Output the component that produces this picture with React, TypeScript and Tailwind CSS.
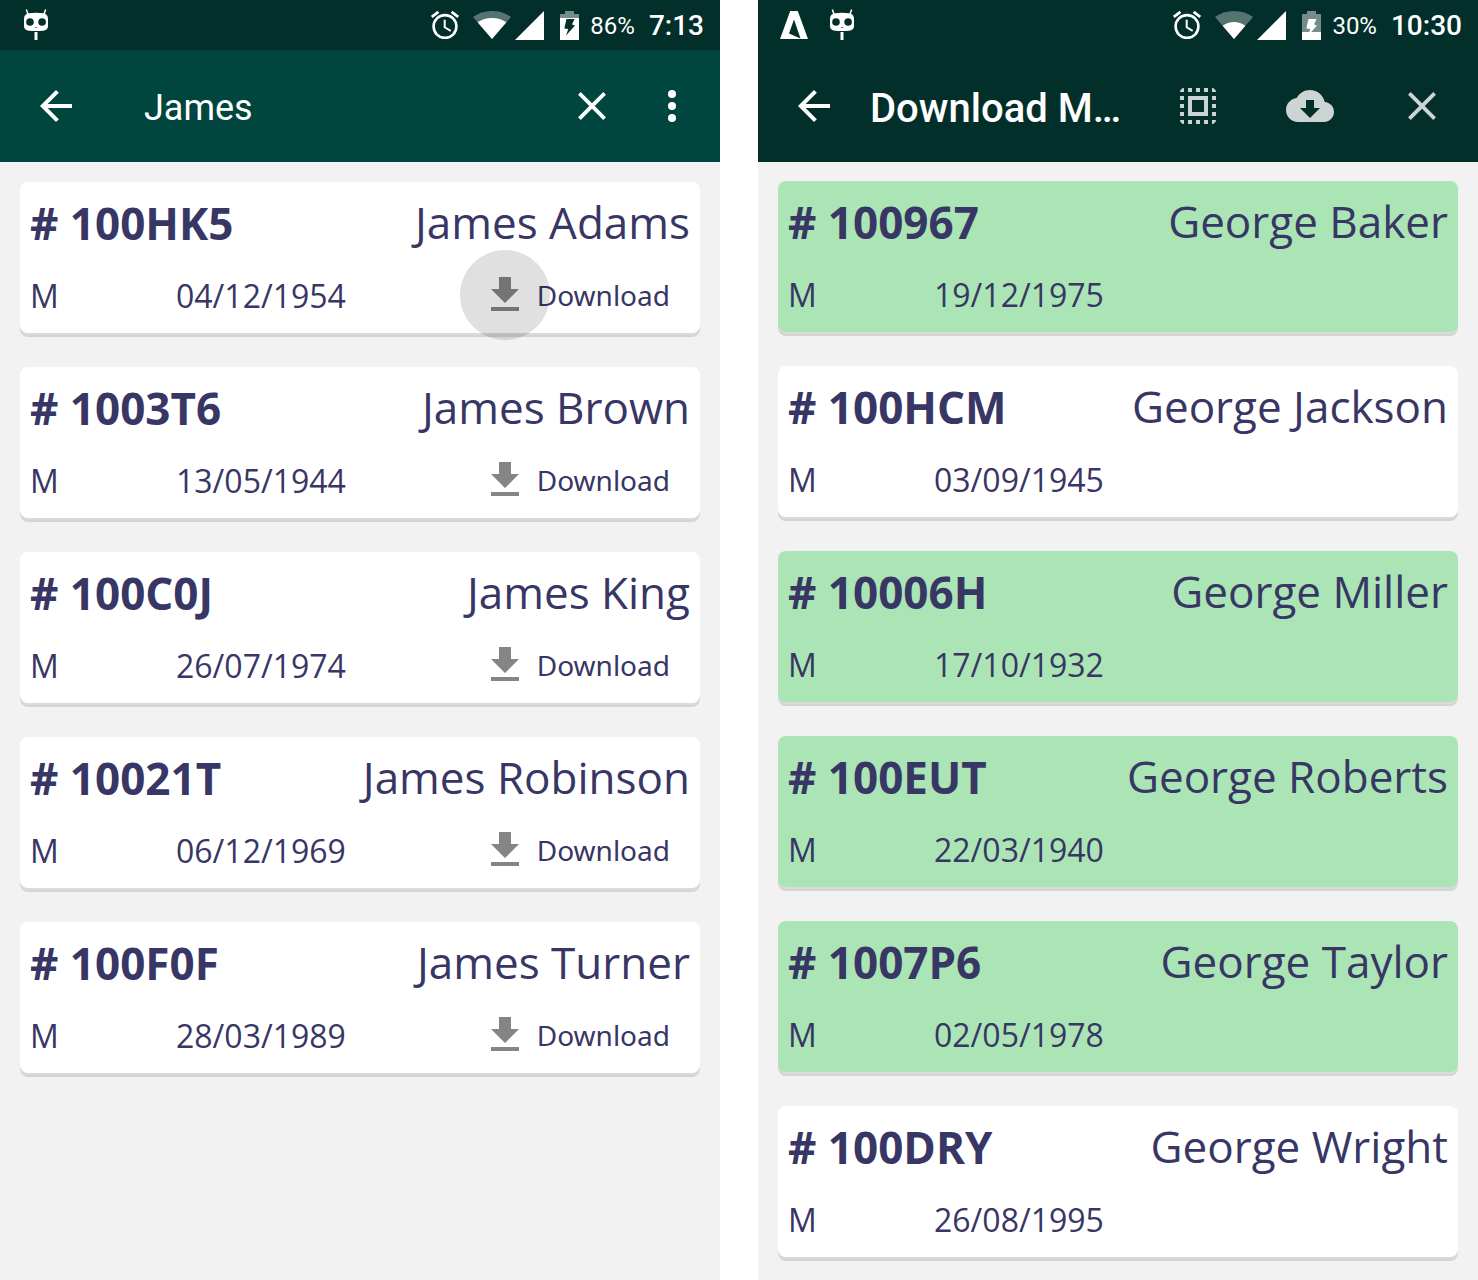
import type { ReactNode } from "react";

type Patient = { id: string; name: string; dob: string; selected?: boolean; pressed?: boolean };

const found: Patient[] = [
  { id: "100HK5", name: "James Adams", dob: "04/12/1954", pressed: true },
  { id: "1003T6", name: "James Brown", dob: "13/05/1944" },
  { id: "100C0J", name: "James King", dob: "26/07/1974" },
  { id: "10021T", name: "James Robinson", dob: "06/12/1969" },
  { id: "100F0F", name: "James Turner", dob: "28/03/1989" },
];

const picked: Patient[] = [
  { id: "100967", name: "George Baker", dob: "19/12/1975", selected: true },
  { id: "100HCM", name: "George Jackson", dob: "03/09/1945" },
  { id: "10006H", name: "George Miller", dob: "17/10/1932", selected: true },
  { id: "100EUT", name: "George Roberts", dob: "22/03/1940", selected: true },
  { id: "1007P6", name: "George Taylor", dob: "02/05/1978", selected: true },
  { id: "100DRY", name: "George Wright", dob: "26/08/1995" },
];

function RobotIcon() {
  return (
    <svg className="h-8 w-6" viewBox="0 0 24 32" fill="#fff" aria-hidden="true">
      <path d="M2.3 0.5 4 5M21.7 0.5 20 5" stroke="#fff" strokeWidth="1.5" fill="none" />
      <path
        fillRule="evenodd"
        d="M5 4.3Q12 3.2 19 4.3Q24 5 24 10V17Q24 21.3 19 21.7Q12 22.5 5 21.7Q0 21.3 0 17V10Q0 5 5 4.3ZM6 9.2a3.8 3.8 0 1 0 0 7.6a3.8 3.8 0 1 0 0-7.6ZM18.1 9.2a3.8 3.8 0 1 0 0 7.6a3.8 3.8 0 1 0 0-7.6ZM10.5 18Q12 18.6 13.5 18Q12 19.8 10.5 18Z"
      />
      <path d="M10.5 23h3v8h-3z" />
    </svg>
  );
}

function LetterLogo() {
  return (
    <svg className="h-7 w-7" viewBox="0 0 28 28" fill="#fff" aria-hidden="true">
      <path fillRule="evenodd" d="M10.2 0h7.6L28 28H0ZM14 8.5 9 22.5 20.5 27.5Z" />
    </svg>
  );
}

function AlarmIcon() {
  return (
    <svg className="h-7 w-7" viewBox="0 0 28 28" fill="none" stroke="#fff" aria-hidden="true">
      <circle cx="14" cy="15.5" r="11.4" strokeWidth="2.6" />
      <path d="M.8 6 7.4.9M27.2 6 20.6.9" strokeWidth="2.8" />
      <path d="M13.7 8.8v7.5l6 3.6" strokeWidth="2" />
    </svg>
  );
}

function WifiIcon({ low }: { low?: boolean }) {
  return (
    <svg className="h-7 w-[38px]" viewBox="0 0 38 28" fill="#fff" aria-hidden="true">
      <path d="M0 6Q8 0 19 0T38 6L19 28Z" opacity=".33" />
      {low ? <path d="M7.6 14.8Q12.5 11 19 11T30.4 14.8L19 28Z" /> : <path d="M4.6 11.3Q11 7 19 7T33.4 11.3L19 28Z" />}
    </svg>
  );
}

function SignalIcon() {
  return (
    <svg className="h-[29px] w-[29px]" viewBox="0 0 29 29" fill="#fff" aria-hidden="true">
      <path d="M29 0V29H0Z" />
    </svg>
  );
}

function BatteryIcon({ low }: { low?: boolean }) {
  const bolt = "M6.5 8h8l-2.500 5.500L15 14.500 6 24.500 8.300 18 4.300 17.500Z";
  return (
    <svg className="h-[29px] w-[19px]" viewBox="0 0 19 29" fill="#fff" aria-hidden="true">
      {low ? (
        <>
          <path d="M5 0h9v3h5v18H0V3h5Z" opacity=".45" />
          <path d="M0 21h19v8H0Z" />
          <path d={bolt} />
        </>
      ) : (
        <>
          <path d="M5 0h9v3h5v4H0V3h5Z" opacity=".45" />
          <path d="M0 7h19v22H0Z" />
          <path d={bolt} fill="#022f2a" />
        </>
      )}
    </svg>
  );
}

function StatusBar({ time, charge, low, children }: { time: string; charge: string; low?: boolean; children: ReactNode }) {
  return (
    <div className="flex h-[50px] items-center justify-between bg-[#022f2a] pr-4 font-[Roboto,sans-serif] text-white">
      <div className="flex items-center gap-[22px]">{children}</div>
      <div className="flex items-center">
        <AlarmIcon />
        <span className="ml-3.5 flex">
          <WifiIcon low={low} />
        </span>
        <span className="ml-1 flex">
          <SignalIcon />
        </span>
        <span className="ml-4 flex">
          <BatteryIcon low={low} />
        </span>
        <span className="ml-[11px] pt-0.5 text-[24px] leading-[50px]">{charge}</span>
        <span className="ml-3.5 pt-0.5 text-[28px] leading-[50px] font-medium">{time}</span>
      </div>
    </div>
  );
}

function BackIcon() {
  return (
    <svg className="h-12 w-12" viewBox="0 0 24 24" fill="#fff" aria-hidden="true">
      <path d="M20 11H7.830l5.590-5.590L12 4l-8 8 8 8 1.410-1.410L7.830 13H20v-2z" />
    </svg>
  );
}

function CloseIcon() {
  return (
    <svg className="h-12 w-12" viewBox="0 0 24 24" fill="none" stroke="currentColor" strokeWidth="1.9" aria-hidden="true">
      <path d="M5.7 5.7 18.3 18.3M18.3 5.7 5.7 18.3" />
    </svg>
  );
}

function MoreIcon() {
  return (
    <svg className="h-12 w-12" viewBox="0 0 24 24" fill="#fff" aria-hidden="true">
      <circle cx="12" cy="6" r="2" />
      <circle cx="12" cy="12" r="2" />
      <circle cx="12" cy="18" r="2" />
    </svg>
  );
}

function SelectAllIcon() {
  return (
    <svg className="h-12 w-12" viewBox="0 0 24 24" fill="currentColor" aria-hidden="true">
      <path d="M3 5h2V3c-1.100 0-2 .9-2 2zm0 8h2v-2H3v2zm4 8h2v-2H7v2zM3 9h2V7H3v2zm10-6h-2v2h2V3zm6 0v2h2c0-1.100-.9-2-2-2zM5 21v-2H3c0 1.100.9 2 2 2zm-2-4h2v-2H3v2zM9 3H7v2h2V3zm2 18h2v-2h-2v2zm8-8h2v-2h-2v2zm0 8c1.100 0 2-.9 2-2h-2v2zm0-12h2V7h-2v2zm0 8h2v-2h-2v2zm-4 4h2v-2h-2v2zm0-16h2V3h-2v2zM7 17h10V7H7v10zm2-8h6v6H9V9z" />
    </svg>
  );
}

function CloudIcon() {
  return (
    <svg className="h-12 w-12" viewBox="0 0 24 24" fill="currentColor" aria-hidden="true">
      <path
        fillRule="evenodd"
        d="M19.350 10.040C18.670 6.590 15.640 4 12 4 9.110 4 6.600 5.640 5.350 8.040 2.340 8.360 0 10.910 0 14c0 3.310 2.690 6 6 6h13c2.760 0 5-2.240 5-5 0-2.640-2.050-4.780-4.650-4.960zM17 13l-5 5-5-5h3V9h4v4h3z"
      />
    </svg>
  );
}

function DownloadIcon() {
  return (
    <svg className="h-12 w-12" viewBox="0 0 24 24" fill="#858585" aria-hidden="true">
      <path d="M19 9h-4V3H9v6H5l7 7 7-7zM5 18v2h14v-2H5z" />
    </svg>
  );
}

function Card({ patient, download }: { patient: Patient; download?: boolean }) {
  return (
    <li
      className={`h-[151px] rounded-lg px-2.5 text-[#383664] shadow-[0_2px_0_#dadada,0_4px_0_#d4d4d4] ${
        patient.selected ? "bg-[#abe5b5]" : "bg-white"
      }`}
    >
      <div className="flex h-[81px] items-center justify-between text-[44px] leading-[60px] whitespace-nowrap">
        <h2 className="font-bold"># {patient.id}</h2>
        <span className="pb-0.5">{patient.name}</span>
      </div>
      <div className="flex h-16 items-center text-[32px] leading-[44px]">
        <span className="w-[146px] pt-0.5">M</span>
        <span className="pt-0.5">{patient.dob}</span>
        {download && (
          <button type="button" className="relative ml-auto flex items-center gap-2 pr-5 font-['Noto_Sans',sans-serif] text-[28px] leading-[40px]">
            <DownloadIcon />
            Download
            {patient.pressed && <span className="absolute top-1/2 left-6 h-[90px] w-[90px] -translate-x-1/2 -translate-y-1/2 rounded-full bg-black/12" />}
          </button>
        )}
      </div>
    </li>
  );
}

export default function App() {
  return (
    <div className="flex min-h-screen gap-[38px] bg-white font-['Open_Sans',sans-serif]">
      <section className="flex min-w-0 flex-1 flex-col bg-[#f2f2f2]" aria-label="Search">
        <StatusBar time="7:13" charge="86%">
          <span className="flex pl-6">
            <RobotIcon />
          </span>
        </StatusBar>
        <header className="flex h-28 items-center bg-[#01463e] px-6 font-[Roboto,sans-serif] text-white">
          <button type="button" aria-label="Back" className="mr-16 ml-2">
            <BackIcon />
          </button>
          <input
            type="text"
            aria-label="Search patients"
            defaultValue="James"
            className="h-20 min-w-0 flex-1 bg-transparent pt-1 text-[36px] outline-none"
          />
          <button type="button" aria-label="Clear">
            <CloseIcon />
          </button>
          <button type="button" aria-label="More options" className="ml-8">
            <MoreIcon />
          </button>
        </header>
        <ul className="flex flex-col gap-[34px] p-5">
          {found.map((p) => (
            <Card key={p.id} patient={p} download />
          ))}
        </ul>
      </section>
      <section className="flex min-w-0 flex-1 flex-col bg-[#f2f2f2]" aria-label="Download">
        <StatusBar time="10:30" charge="30%" low>
          <span className="flex pl-[22px]">
            <LetterLogo />
          </span>
          <RobotIcon />
        </StatusBar>
        <header className="flex h-28 items-center bg-[#022f2a] px-8 font-[Roboto,sans-serif] text-white">
          <button type="button" aria-label="Back">
            <BackIcon />
          </button>
          <h1 className="ml-8 min-w-0 flex-1 pt-1.5 text-[40px] font-medium whitespace-nowrap">Download M…</h1>
          <div className="flex gap-16 text-[#cdd5d4]">
            <button type="button" aria-label="Select all">
              <SelectAllIcon />
            </button>
            <button type="button" aria-label="Download selected">
              <CloudIcon />
            </button>
            <button type="button" aria-label="Close">
              <CloseIcon />
            </button>
          </div>
        </header>
        <ul className="flex flex-col gap-[34px] px-5 pt-[19px] pb-5">
          {picked.map((p) => (
            <Card key={p.id} patient={p} />
          ))}
        </ul>
      </section>
    </div>
  );
}
